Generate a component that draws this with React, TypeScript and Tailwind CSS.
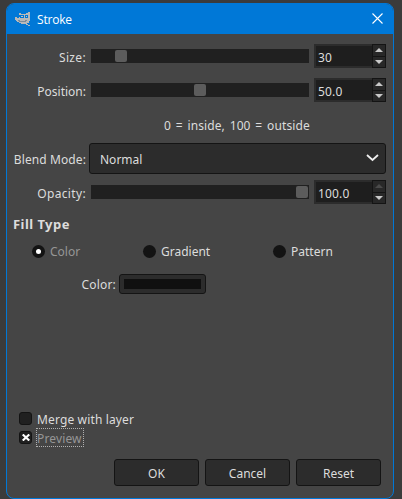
import React from 'react';

function Wilber() {
  return (
    <svg className="h-[16px] w-[17px]" viewBox="0 0 17 16" shapeRendering="crispEdges">
      <path
        fill="#b9b9b9"
        d="M14 1h2v9h-1v2h-2v1h-6v-1h-2v-1h-2v-1h-1v-1h-1v-3h2v1h2v-1h1v-2h-1v-2h2v1h5v-1h2zM12 13h2v1h2v1h-2v-1h-2z"
      />
      <path fill="#0078d7" d="M6 4h4v3h-4zM11 4h3v3h-3z" />
      <path fill="#c5c5c5" d="M7 5h2v1h-2zM12 5h1v1h-1z" />
      <path fill="#7d8b99" d="M4 9h2v1h5v-1h2v1h-1v1h-7v-1h-1z" />
    </svg>
  );
}

function Slider({ thumb }: { thumb: number }) {
  return (
    <div className="flex h-[14px] w-[218px] items-center bg-[#202020]">
      <div className="h-3 w-3 rounded-[2px] bg-[#5c5c5c]" style={{ marginLeft: thumb }} />
    </div>
  );
}

function Spin({ value, maxed = false }: { value: string; maxed?: boolean }) {
  return (
    <div className="ml-[5px] flex h-6 w-[72px] bg-[#2c2c2c]">
      <div className="my-[2px] ml-[2px] flex w-[56px] items-center bg-[#1e1e1e] pl-[2px] pt-[3px] tracking-[0.15px]">{value}</div>
      <div className="flex w-[14px] flex-col gap-px border border-[#141414] bg-[#141414]">
        <div className="flex flex-1 items-center justify-center bg-[#282828]">
          <svg className={maxed ? 'text-[#4a4a4a]' : 'text-[#c8c8c8]'} width="8" height="4" viewBox="0 0 8 4">
            <path fill="currentColor" d="M4 0L8 4H0z" />
          </svg>
        </div>
        <div className="flex flex-1 items-center justify-center bg-[#282828] text-[#c8c8c8]">
          <svg width="8" height="4" viewBox="0 0 8 4">
            <path fill="currentColor" d="M0 0H8L4 4z" />
          </svg>
        </div>
      </div>
    </div>
  );
}

function SliderRow({ label, thumb, value, maxed }: { label: string; thumb: number; value: string; maxed?: boolean }) {
  return (
    <div className="flex h-6 items-center">
      <div className={`mr-[5px] w-[79px] pt-[3px] text-right ${label === 'Position:' ? '' : 'tracking-[0.35px]'}`}>{label}</div>
      <Slider thumb={thumb} />
      <Spin value={value} maxed={maxed} />
    </div>
  );
}

function Radio({ label, checked = false }: { label: string; checked?: boolean }) {
  return (
    <div className="flex items-center gap-[5px]">
      <div className="flex h-[13px] w-[13px] items-center justify-center rounded-full bg-[#131313]">
        {checked && <div className="h-[5px] w-[5px] rounded-full bg-white" />}
      </div>
      <span className={checked ? 'pt-[2px] text-[#969696]' : 'pt-[2px]'}>{label}</span>
    </div>
  );
}

function Button({ label }: { label: string }) {
  return (
    <button className="flex h-[27px] w-[85px] items-center justify-center rounded-[3px] border border-[#141414] bg-[#2c2c2c] pt-[2px]">
      {label}
    </button>
  );
}

export default function App() {
  return (
    <div className="h-[499px] w-[402px] overflow-hidden bg-[#3b3b3b] pl-[6px] pt-[3px] font-['Noto_Sans',sans-serif] text-[12px] leading-4 text-[#dcdcdc]">
      <div className="flex h-[496px] w-[388px] flex-col overflow-hidden rounded-[8px] border border-[#0078d7] bg-[#454545]">
        <div className="flex h-[30px] shrink-0 items-center bg-[#0078d7] pl-[7px] pr-[10px] text-white">
          <Wilber />
          <span className="ml-[6px] flex-1 pt-px font-['Open_Sans',sans-serif] text-[12px] tracking-[-0.2px]">Stroke</span>
          <svg className="mb-px" width="11" height="11" viewBox="0 0 11 11" fill="none" stroke="white" strokeWidth="1.1">
            <path d="M.5.5l10 10M10.5.5l-10 10" />
          </svg>
        </div>
        <div className="flex flex-col pt-[10px]">
          <SliderRow label="Size:" thumb={24} value="30" />
          <div className="h-[10px]" />
          <SliderRow label="Position:" thumb={103} value="50.0" />
          <div className="mt-[16px] h-4 pl-[157px] [word-spacing:1.6px] tracking-[0.09px]">0 = inside, 100 = outside</div>
          <div className="mt-[9px] flex h-[31px] items-center">
            <div className="w-[79px] whitespace-nowrap pt-[2px] text-right tracking-[0.1px]">Blend Mode:</div>
            <div className="ml-[3px] flex h-[31px] w-[297px] items-center justify-between rounded-[3px] border border-[#141414] bg-[#2c2c2c] pl-[10px] pr-[6px]">
              <span className="pt-[2px]">Normal</span>
              <svg className="mb-[2px]" width="13" height="8" viewBox="0 0 13 8" fill="none" stroke="#eeeeee" strokeWidth="1.8">
                <path d="M1 1l5.5 5L12 1" />
              </svg>
            </div>
          </div>
          <div className="h-[6px]" />
          <SliderRow label="Opacity:" thumb={205} value="100.0" maxed />
          <div className="mt-[12px] h-4 pl-[6px] text-[13px] font-bold tracking-[0.45px]">Fill Type</div>
          <div className="mt-[10px] grid h-[18px] grid-cols-[111px_130px_1fr] items-center pl-[25px]">
            <Radio label="Color" checked />
            <Radio label="Gradient" />
            <Radio label="Pattern" />
          </div>
          <div className="mt-[14px] flex h-5 items-center">
            <span className="w-[109px] pt-[2px] text-right tracking-[0.2px]">Color:</span>
            <div className="ml-[3px] h-5 w-[87px] rounded-[3px] border border-[#141414] bg-[#2c2c2c] p-1">
              <div className="h-[10px] w-[77px] bg-[#101010]" />
            </div>
          </div>
        </div>
        <div className="mt-[115px] flex flex-col pl-[12px]">
          <div className="flex h-[19px] items-center">
            <div className="h-[13px] w-[13px] rounded-[3px] border border-[#131313] bg-[#202020]" />
            <span className="pl-[5px] pt-[2px] tracking-[0.14px]">Merge with layer</span>
          </div>
          <div className="flex h-[19px] items-center">
            <div className="flex h-[13px] w-[13px] items-center justify-center rounded-[3px] border border-[#131313] bg-[#202020]">
              <svg width="8" height="7" viewBox="0 0 8 7" fill="none" stroke="white" strokeWidth="2.2">
                <path d="M.7.5l6.6 6M7.3.5l-6.6 6" />
              </svg>
            </div>
            <span className="ml-1 flex h-[19px] w-[48px] items-center whitespace-nowrap border border-dotted border-[#b0b0b0] pt-[2px] tracking-[0.15px] text-[#969696]">
              Preview
            </span>
          </div>
        </div>
        <div className="mt-3 flex gap-[6px] pl-[107px]">
          <Button label="OK" />
          <Button label="Cancel" />
          <Button label="Reset" />
        </div>
      </div>
    </div>
  );
}
